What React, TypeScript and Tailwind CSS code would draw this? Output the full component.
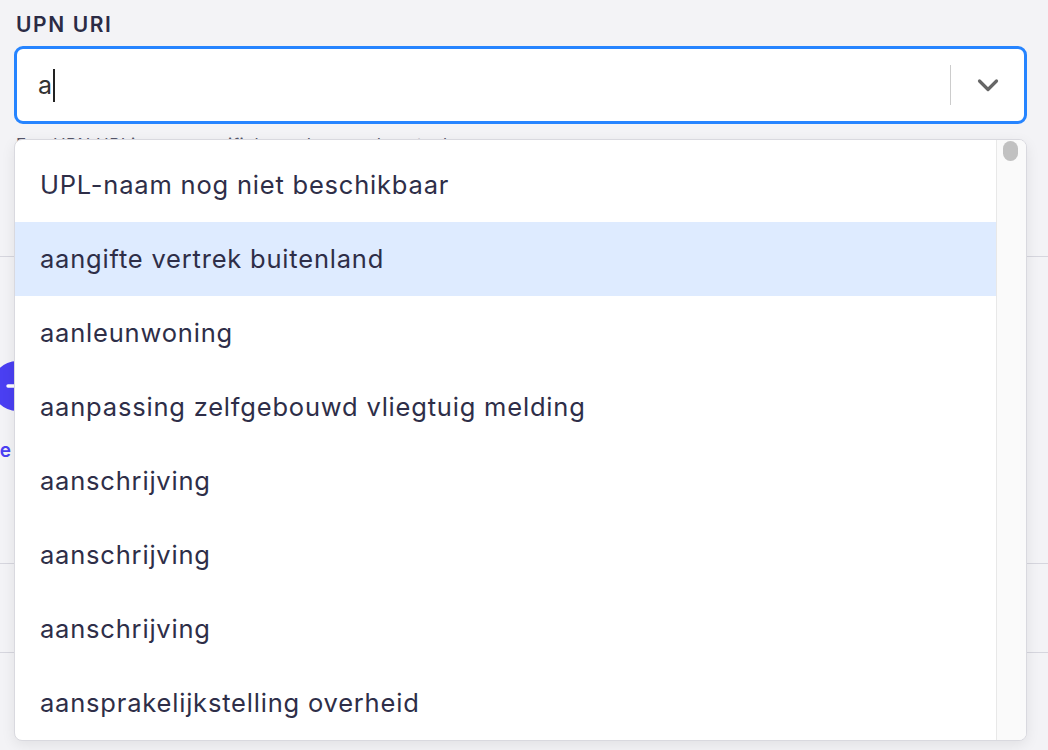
import React from "react";

const options = [
  "UPL-naam nog niet beschikbaar",
  "aangifte vertrek buitenland",
  "aanleunwoning",
  "aanpassing zelfgebouwd vliegtuig melding",
  "aanschrijving",
  "aanschrijving",
  "aanschrijving",
  "aansprakelijkstelling overheid",
  "aanvraag",
];

export default function App() {
  return (
    <div
      className="relative h-[750px] w-full overflow-hidden bg-[#f3f3f6] text-[#2e2e48]"
      style={{ fontFamily: "Inter, 'Noto Sans', sans-serif" }}
    >
      {/* form field */}
      <div className="pl-[14px] pr-[21px] pt-[11px]">
        <label className="block pl-[2px] text-[21px] font-semibold leading-[28px] tracking-[1.6px] text-[#2b2b45]">
          UPN URI
        </label>
        <div className="mt-[7px] flex h-[78px] items-center rounded-[9px] border-[3px] border-[#2684ff] bg-white">
          <div className="flex flex-1 items-center pl-[21px]">
            <span className="text-[25px] leading-none text-[#333]">a</span>
            <span className="ml-[1px] h-[33px] w-[2px] bg-[#222]" />
          </div>
          <span className="h-[40px] w-px bg-[#cccccc]" />
          <div className="flex w-[73px] items-center justify-center">
            <svg width="24" height="24" viewBox="0 0 24 24" fill="none">
              <path d="M3.5 8l8.5 8.5L20.5 8" stroke="#666" strokeWidth="3.2" strokeLinecap="round" strokeLinejoin="round" />
            </svg>
          </div>
        </div>
        <p className="mt-[9px] pl-[2px] text-[17px] leading-[24px] tracking-[0.5px] text-[#55556a]">
          Een UPN URI is een specifieke code voor deze taak
        </p>
      </div>

      {/* page content underneath the menu */}
      <div className="mt-[99px] border-t border-[#d6d6de]" />
      <div className="mt-[104px] flex flex-col items-start">
        <div className="ml-[-8px] flex h-[50px] w-[50px] items-center justify-center rounded-full bg-[#4a3ff2]">
          <svg width="26" height="26" viewBox="0 0 26 26">
            <path d="M13 4v18M4 13h18" stroke="white" strokeWidth="3.4" strokeLinecap="round" />
          </svg>
        </div>
        <div className="mt-[28px] flex w-[11px] justify-end whitespace-nowrap">
          <span className="text-[19px] font-semibold leading-[24px] text-[#4a3ff2]">Stap toevoegen aan de taak toe</span>
        </div>
      </div>
      <div className="mt-[100px] border-t border-[#d6d6de]" />
      <div className="mt-[88px] border-t border-[#d6d6de]" />

      {/* open options menu */}
      <div className="absolute left-[14px] top-[139px] h-[602px] w-[1013px] overflow-hidden rounded-[8px] border border-[#d9d9df] bg-white shadow-[0_4px_14px_rgba(0,0,0,0.08)]">
        <div className="flex h-full">
          <ul className="flex-1 pt-[8px]">
            {options.map((o, i) => (
              <li
                key={i}
                className={`flex h-[74px] items-center pl-[25px] text-[25.5px] leading-none tracking-[0.8px] text-[#2e2e48] ${
                  i === 1 ? "bg-[#deebff]" : ""
                }`}
              >
                {o}
              </li>
            ))}
          </ul>
          <div className="relative w-[30px] border-l border-[#e8e8e8] bg-[#fafafa]">
            <div className="absolute left-[6px] top-[1px] h-[20px] w-[15px] rounded-full bg-[#c1c1c1]" />
          </div>
        </div>
      </div>
    </div>
  );
}
